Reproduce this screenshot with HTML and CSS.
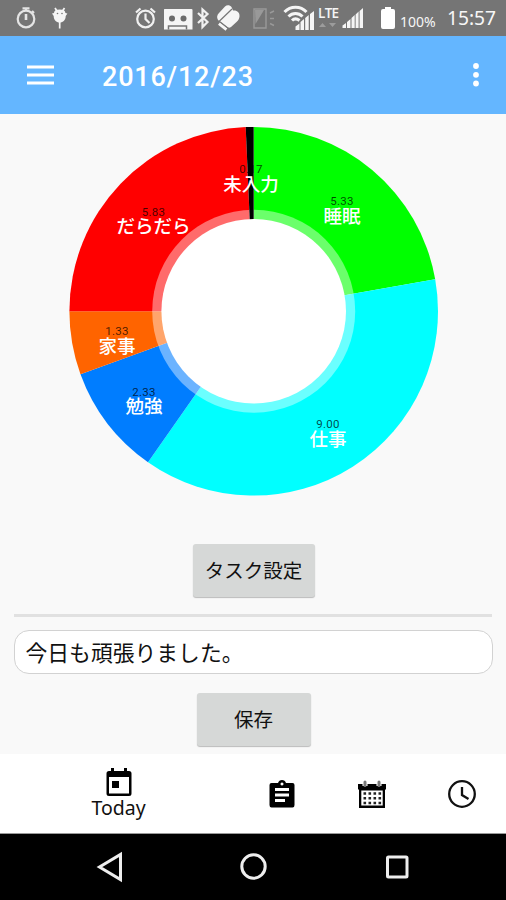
FILE: index.html
```html
<!DOCTYPE html>
<html lang="ja">
<head>
<meta charset="utf-8">
<title>2016/12/23</title>
<link rel="stylesheet" href="styles.css">
</head>
<body>
<div class="screen">
  <header class="status">
    <svg class="status-icons" width="380" height="36" viewBox="0 0 380 36" fill="#f5f5f5">
      <g fill="none" stroke="#e4e4e4" stroke-width="2.200"><circle cx="26" cy="19" r="8.300"/><path d="M22.500 8.300h7M26 8v3M32 11l2 2"/><path d="M26 14v6" stroke-width="2.600"/></g>
      <path d="M54 13c0-2.400 2-3.500 5.700-3.500s5.700 1.100 5.700 3.500l2 .5-1.700 2.500c0 4-2.500 6.500-6 6.500S53.700 20 53.700 16L52 13.500z"/><path d="M55 8l2 3M64.500 8l-2 3M59.700 22v6.500" stroke="#f5f5f5" stroke-width="1.700"/><g fill="#777"><circle cx="57.500" cy="13.500" r=".8"/><circle cx="62" cy="13.500" r=".8"/></g>
      <g fill="none" stroke="#f0f0f0" stroke-width="2.200"><circle cx="145.500" cy="19" r="8.300"/><path d="M136 12.500l4.500-4M155 12.500l-4.500-4M145.500 13.500V19l4 4"/></g>
      <path d="M164.500 9h27q1 0 1 1v19.500h-28.500V10q0-1 .5-1z"/><path d="M168.500 29.500v-3.500h18v3.500" fill="none" stroke="#757575" stroke-width="1.500"/><g fill="#6c6c6c"><circle cx="172" cy="18.500" r="3"/><circle cx="183.500" cy="18.500" r="3"/></g>
      <path d="M198 13l9.500 9-5 5V9.500l5 4.500-9.500 9" fill="none" stroke="#f0f0f0" stroke-width="2.200"/>
      <path d="M218 20c-1.500-3-1-5 1-7l6-6.500c2-2 5-1.500 6.500.5l1.500 3.500c4-.5 7 2 6.500 6-.3 2-1 4-3 5.500l-5.500 5q-2 1.500-4 0z"/><path d="M219 23.500l7.500 6" stroke="#f5f5f5" stroke-width="3"/><path d="M219 21.500l13-12.500M219.500 21.500l9 7" stroke="#777" stroke-width="1.200"/>
      <g fill="none" stroke="#999" stroke-width="1.400"><path d="M254 9h12v19h-12zM270 13l4-2M270 18.500h4M270 23.500l4 2"/></g><path d="M255 10h9l-8.500 14z" fill="#999"/>
      <g fill="none" stroke="#f5f5f5" stroke-width="3"><path d="M284.500 12c6-6.500 16-6.500 22 0M288.500 16.500c4-4 10-4 14 0M292 20.500c2-2 5-2 7.500 0"/></g>
      <path d="M295.500 30v-3.500l4-3V30zM300.500 30v-8l3.500-3v11zM305.200 30V18l3.500-3v15zM310 30V14l4-3v19z"/>
      <text class="lte" x="318" y="18">LTE</text><path d="M319 27l3.500-4 3.500 4zM329 23h7l-3.500 4z" fill="#9c9c9c"/>
      <path d="M342.500 28v-2.500l3.500-2.500v5zM347 28v-6l3.500-3v9zM351.500 28V18l3.200-3v13zM355.600 28V14.500l3-3V28zM359.600 28V11l3.400-3v20z"/>
    </svg>
    <svg class="battery" width="14" height="36" viewBox="0 0 14 36"><path fill="#fff" d="M4 7h6v2h2q2 0 2 2v16q0 2-2 2H2q-2 0-2-2V11q0-2 2-2h2z"/></svg>
    <span class="percent">100%</span>
    <span class="clock">15:57</span>
  </header>

  <div class="appbar">
    <svg class="menu" width="27" height="20" viewBox="0 0 27 20"><path d="M0 2h27M0 10h27M0 18h27" stroke="#fff" stroke-width="3"/></svg>
    <h1 class="title">2016/12/23</h1>
    <svg width="6" height="24" viewBox="0 0 6 24" fill="#fff"><circle cx="3" cy="3" r="2.900"/><circle cx="3" cy="11.800" r="2.900"/><circle cx="3" cy="20.500" r="2.900"/></svg>
  </div>

  <main class="content">
    <svg class="chart" width="506" height="400" viewBox="0 114 506 400">
      <g transform="translate(253.700 311.200)">
        <path fill="#0f0" d="M0 0V-184.300A184.300 184.300 0 0 1 181.500-32z"/>
        <path fill="#0ff" d="M0 0L181.500-32A184.300 184.300 0 0 1-105.700 151z"/>
        <path fill="#007dff" d="M0 0L-105.700 151A184.300 184.300 0 0 1-173.200 63z"/>
        <path fill="#ff6400" d="M0 0L-173.200 63A184.300 184.300 0 0 1-184.300 0z"/>
        <path fill="red" d="M0 0H-184.300A184.300 184.300 0 0 1-8-184.100z"/>
        <circle r="101.500" fill="#fff" fill-opacity=".42"/>
        <path fill="#000" d="M0 0L-8-184.100A184.300 184.300 0 0 1 0-184.300z"/>
        <circle r="92.300" fill="#fff"/>
      </g>
      <g class="values">
        <text x="251" y="173">0.17</text><text x="342" y="205">5.33</text><text x="328" y="428">9.00</text>
        <text x="144" y="396">2.33</text><text x="117" y="335">1.33</text><text x="153.500" y="216">5.83</text>
      </g>
      <g class="labels">
        <text x="251" y="190.500">未入力</text><text x="342" y="222.500">睡眠</text><text x="328" y="445.500">仕事</text>
        <text x="144" y="412.500">勉強</text><text x="117" y="352.500">家事</text><text x="153.500" y="232.500">だらだら</text>
      </g>
    </svg>
    <button class="button task">タスク設定</button>
    <div class="divider"></div>
    <div class="note">今日も頑張りました。</div>
    <button class="button save">保存</button>
  </main>

  <nav class="tabs">
    <div class="tab today">
      <svg width="26" height="28" viewBox="0 0 26 28"><path fill-rule="evenodd" d="M3 3h2V0h3v3h10V0h3v3h2q2.500 0 2.500 2.500v20q0 2.500-2.500 2.500H3Q.5 28 .5 25.500v-20Q.5 3 3 3zM3 9v16.500h20V9z"/><path d="M6 13h7v7H6z"/></svg>
      <span>Today</span>
    </div>
    <div class="tab"><svg width="26" height="28" viewBox="0 0 26 28"><path fill-rule="evenodd" d="M2.500 3H9q1-3 4-3t4 3h6.500q2 0 2 2v20q0 2.500-2 2.500h-21Q.5 27.500.5 25V5q0-2 2-2zM13 2.500a1.500 1.500 0 1 0 .01 0zM6 8v3h14V8zm0 5.500v3h14v-3zm0 5.500v3h10v-3z"/></svg></div>
    <div class="tab"><svg width="28" height="28" viewBox="0 0 28 28"><path d="M0 4h28v5l-1 1v18H1V10L0 9z"/><path fill="#fff" d="M3.300 10.500h21.400v15H3.300z"/><g stroke="#fff" stroke-width="5"><path d="M7 0v6M21 0v6"/></g><g stroke="#777" stroke-width="3" stroke-linecap="round"><path d="M7 2v3.500M21 2v3.500"/></g><g stroke="#222" stroke-width="2.600" stroke-dasharray="2.600 2.400"><path d="M5.500 13.500h18M5.500 18.300h18M5.500 23h18"/></g></svg></div>
    <div class="tab"><svg width="28" height="28" viewBox="0 0 28 28" fill="none" stroke="#111" stroke-width="2.300"><circle cx="14" cy="14" r="12.800"/><path d="M14 7v8l6.500 4"/></svg></div>
  </nav>

  <footer class="system">
    <svg width="506" height="66" viewBox="0 834 506 66" fill="none" stroke="#eee" stroke-width="3"><path d="M120.500 854.500v25L99.500 867z"/><circle cx="253.500" cy="866.500" r="11.700"/><rect x="387.500" y="857" width="19.500" height="20" rx="1"/></svg>
  </footer>
</div>
</body>
</html>
```

FILE: styles.css
```css
* { box-sizing: border-box; }
body { margin: 0; font-family: "Noto Sans", "Noto Sans CJK JP", sans-serif; }
svg { display: block; flex: none; }
.screen { width: 506px; height: 900px; display: flex; flex-direction: column; overflow: hidden; background: #f9f9f9; }
.status { height: 36px; flex: none; display: flex; align-items: center; background: #757575; color: #f7f7f7; white-space: nowrap; }
.lte { font: 600 13.500px "Open Sans", sans-serif; letter-spacing: -.7px; }
.battery { margin-left: 1px; }
.percent { width: 47px; margin-left: 5px; padding-top: 8px; font-size: 14px; line-height: 20px; }
.clock { font-size: 19.200px; line-height: 36px; }
.appbar { height: 78px; flex: none; display: flex; align-items: center; padding: 0 27px; background: #64b6ff; }
.menu { margin-top: -1px; }
.title { flex: 1; margin: 3px 0 0 48px; color: #fff; font: 500 27px/36px Roboto, sans-serif; letter-spacing: .8px; }
.content { height: 640px; flex: none; display: flex; flex-direction: column; align-items: center; }
.chart { width: 506px; height: 400px; }
.chart text { text-anchor: middle; }
.values { font: 11.500px Roboto, sans-serif; fill: #000; fill-opacity: .72; letter-spacing: .3px; }
.labels { font: 500 18.500px "Noto Sans CJK JP", sans-serif; fill: #fff; }
.button { flex: none; border: 0; padding: 0 0 2px; height: 53px; border-radius: 3px; background: #d6d8d7; box-shadow: 0 1px 1px #bbb; color: #111; font: 19.500px "Noto Sans CJK JP", sans-serif; }
.task { width: 122px; margin: 30px 0 0 1px; }
.save { width: 114px; margin: 19px 0 0 1px; }
.divider { width: 478px; height: 3px; flex: none; margin-top: 17px; background: #e1e1e1; }
.note { width: 479px; height: 44px; flex: none; margin-top: 13px; padding: 0 11px; border: 1.500px solid #d2d2d2; border-radius: 15px; background: #fff; color: #111; font: 21.800px/41px "Noto Sans CJK JP", sans-serif; }
.tabs { height: 80px; flex: none; display: grid; grid-template-columns: 237px 90px 90px 89px; background: #fff; border-bottom: 1px solid #999; }
.tab { display: flex; flex-direction: column; align-items: center; justify-content: center; }
.today { font: 19.500px/24px "Noto Sans", sans-serif; color: #111; }
.system { height: 66px; flex: none; background: #000; }
```
